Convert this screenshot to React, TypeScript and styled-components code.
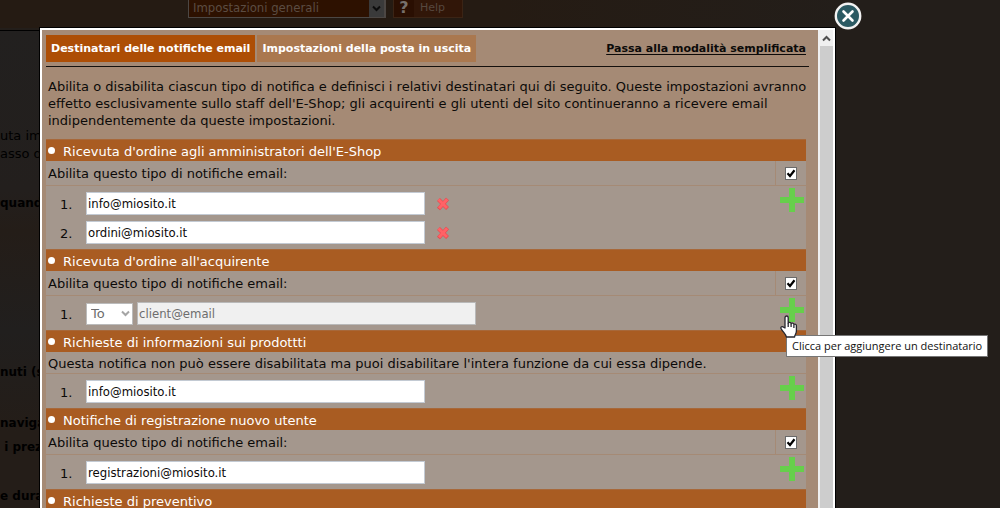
import React from "react";
import styled, { createGlobalStyle } from "styled-components";

const Global = createGlobalStyle`
  * { box-sizing: border-box; }
  body { margin: 0; background: #231e1a; font-family: "DejaVu Sans", Verdana, sans-serif; font-size: 13px; color: #0c0a09; }
  button, input, select { font: inherit; margin: 0; padding: 0; }
`;

const Page = styled.div`
  position: relative;
  height: 100vh;
  overflow: hidden;
  background: #231e1a;
`;

const TopBar = styled.header`
  display: flex;
  gap: 7px;
  height: 28px;
  padding-left: 188px;
  background: linear-gradient(90deg, #251b13 50%, #231e1a 85%);
`;

const DimSelect = styled.select`
  appearance: none;
  width: 180px;
  height: 17px;
  padding: 0 0 2px 4px;
  border: 0;
  background: #2d1100;
  color: #5b4c42;
  font-family: "DejaVu Sans Condensed", "DejaVu Sans", sans-serif;
  font-stretch: condensed;
  line-height: 15px;
`;

const DimSelectBox = styled.div`
  display: flex;
  height: 18px;
  border: 1px solid #4c4744;
  border-width: 0 2px 1px 1px;
`;

const DimArrow = styled.span`
  display: flex;
  align-items: center;
  justify-content: center;
  width: 15px;
  background: #3a3a3a;
`;

const DimHelp = styled.button`
  display: flex;
  width: 70px;
  height: 18px;
  border: 1px solid #3b2415;
  border-top: 0;
  background: #311608;
  color: #57483f;
  font-size: 11px;
  line-height: 16px;
`;

const DimMark = styled.span`
  width: 20px;
  background: #2a0f02;
  color: #77706b;
  font-weight: bold;
  font-size: 16px;
`;

const DimLabel = styled.span`
  padding-left: 6px;
`;

const DimColumn = styled.main`
  width: 40px;
  overflow: hidden;
  white-space: nowrap;
  border-top: 1px solid #000;
  margin-top: 2px;
  height: 100%;
  background: linear-gradient(#22201f, #231f1d 160px, #241d18 200px, #211f1e 300px, #241d18 400px);
`;

const DimLine = styled.p<{ $gap: number; $bold?: boolean }>`
  margin: ${(p) => p.$gap}px 0 0;
  line-height: 18px;
  color: #000;
  font-weight: ${(p) => (p.$bold ? "bold" : "normal")};
  font-size: ${(p) => (p.$bold ? 12 : 13)}px;
`;

const Modal = styled.section`
  position: absolute;
  top: 28px;
  left: 40px;
  right: 165px;
  min-height: 100%;
  display: flex;
  border: 2px solid #fff;
  box-shadow: 0 0 0 1px #000;
  background: #a58a75;
`;

const Content = styled.div`
  flex: 1;
  min-width: 0;
  padding: 5px 12px 0 4px;
`;

const ScrollTrack = styled.div`
  width: 15px;
  border-left: 2px solid #f0f0f0;
  background: #cdcdcd;
`;

const ScrollUp = styled.button`
  display: flex;
  align-items: center;
  justify-content: center;
  width: 100%;
  height: 16px;
  border: 0;
  background: #f0f0f0;
`;

const CloseButton = styled.button`
  position: absolute;
  top: -28px;
  right: -29px;
  width: 28px;
  height: 28px;
  border: 0;
  background: none;
  svg { display: block; }
`;

const TabBar = styled.nav`
  display: flex;
  align-items: center;
  gap: 2px;
  height: 32px;
  padding-bottom: 4px;
  margin-right: -3px;
  border-bottom: 1px solid #14100d;
`;

const Tab = styled.button<{ $active?: boolean }>`
  height: 27px;
  padding: 0 5px;
  border: 0;
  background: ${(p) => (p.$active ? "#ad4e05" : "#aa784f")};
  color: #fff;
  font-size: 11px;
  font-weight: bold;
  white-space: nowrap;
`;

const ModeLink = styled.a`
  margin-left: auto;
  padding-right: 3px;
  color: #0c0a09;
  font-size: 11px;
  font-weight: bold;
  text-underline-offset: 2px;
`;

const Intro = styled.p`
  margin: 11px -10px 10px 0;
  padding-left: 2px;
  line-height: 17px;
`;

const Heading = styled.h2`
  display: flex;
  align-items: center;
  gap: 8px;
  height: 22px;
  margin: 0;
  padding: 2px 0 0 2px;
  background: #a95c22;
  border-top: 1px solid #a7683a;
  color: #fff;
  font-size: 13px;
  font-weight: normal;
  &::before {
    content: "";
    width: 7px;
    height: 7px;
    margin-bottom: 2px;
    border-radius: 50%;
    background: #fff;
  }
`;

const Group = styled.section`
  background: #a4978d;
`;

const EnableRow = styled.label`
  display: flex;
  height: 25px;
  border-bottom: 1px solid #a58a75;
  line-height: 26px;
  padding-left: 2px;
`;

const EnableText = styled.span`
  flex: 1;
`;

const CheckCell = styled.span`
  position: relative;
  width: 31px;
  border-left: 1px solid #a58a75;
  svg { position: absolute; left: 9px; top: 6px; pointer-events: none; }
`;

const CheckBox = styled.input`
  appearance: none;
  display: block;
  width: 12px;
  height: 13px;
  margin: 6px 0 0 9px;
  border: 1px solid #6a6a6a;
  background: #fff;
`;

const Note = styled.p`
  height: 22px;
  margin: 0;
  padding-left: 2px;
  border-bottom: 1px solid #a58a75;
  line-height: 24px;
`;

const Body = styled.div`
  display: flex;
  align-items: flex-start;
  justify-content: space-between;
  padding: 2px 2px 0 0;
`;

const Recipients = styled.ol`
  display: flex;
  flex-direction: column;
  gap: 6px;
  margin: 0;
  padding: 4px 0 5px 14px;
  list-style: none;
`;

const Recipient = styled.li`
  display: flex;
  align-items: center;
  height: 23px;
`;

const Num = styled.span`
  width: 26px;
  padding-top: 2px;
`;

const Email = styled.input`
  width: 339px;
  height: 23px;
  padding: 0 1px;
  border: 1px solid #c3cad3;
  background: #fff;
  color: #0c0a09;
  font-family: "DejaVu Sans Condensed", "DejaVu Sans", sans-serif;
  font-stretch: condensed;
  &:disabled { background: #f0f0f0; color: #6d6d6d; border-color: #b9b9b9; }
`;

const KindBox = styled.span`
  display: flex;
  align-items: center;
  width: 47px;
  height: 22px;
  margin-right: 4px;
  border: 1px solid #bbb;
  background: #fff;
`;

const Kind = styled.select`
  appearance: none;
  width: 34px;
  height: 20px;
  padding-left: 4px;
  border: 0;
  background: #fff;
  color: #6d6d6d;
  opacity: 1;
`;

const IconButton = styled.button`
  display: block;
  border: 0;
  background: none;
  svg { display: block; }
`;

const RemoveButton = styled(IconButton)`
  margin-left: 11px;
`;

const AddBox = styled.div`
  position: relative;
`;

const Pointer = styled.svg`
  position: absolute;
  left: 0;
  top: 17px;
  z-index: 2;
`;

const Tooltip = styled.div`
  position: absolute;
  left: 6px;
  top: 37px;
  z-index: 1;
  height: 22px;
  padding: 0 5px;
  border: 1px solid #767676;
  background: #fff;
  color: #111;
  font-family: "Open Sans", "Noto Sans", sans-serif;
  font-size: 11px;
  line-height: 20px;
  white-space: nowrap;
`;

const Chevron = ({ up, color, size = 9 }: { up?: boolean; color: string; size?: number }) => (
  <svg width={size} height={size} viewBox="0 0 9 9" fill="none" stroke={color} strokeWidth="2">
    <path d={up ? "M1 6.5 4.5 3 8 6.5" : "M1 2.5 4.5 6 8 2.5"} />
  </svg>
);

const CheckMark = () => (
  <svg width="12" height="13" viewBox="0 0 12 13" fill="none" stroke="#000" strokeWidth="2.2">
    <path d="M2.5 6.2 5 9 9.5 3.3" />
  </svg>
);

const PlusIcon = () => (
  <svg width="24" height="24" viewBox="0 0 24 24" fill="#66cf4b">
    <path d="M9 0h6v9h9v6h-9v9H9v-9H0V9h9z" />
  </svg>
);

const CrossIcon = () => (
  <svg width="14" height="14" viewBox="0 0 14 14" fill="none">
    <path d="M2.5 2.5 11.5 11.5M11.5 2 2.5 12" stroke="#e8474c" strokeWidth="4" />
    <path d="M2.5 2.5 11 11M11.2 2.2 3 11.2" stroke="#ff6266" strokeWidth="3" />
  </svg>
);

type Item = { email: string; kind?: string; removable?: boolean };

function Notification({ title, items, note, tip }: { title: string; items: Item[]; note?: string; tip?: string }) {
  return (
    <Group>
      <Heading>{title}</Heading>
      {note ? (
        <Note>{note}</Note>
      ) : (
        <EnableRow>
          <EnableText>Abilita questo tipo di notifiche email:</EnableText>
          <CheckCell>
            <CheckBox type="checkbox" defaultChecked />
            <CheckMark />
          </CheckCell>
        </EnableRow>
      )}
      <Body>
        <Recipients>
          {items.map((item, i) => (
            <Recipient key={item.email}>
              <Num>{i + 1}.</Num>
              {item.kind && (
                <KindBox>
                  <Kind disabled aria-label="Tipo di destinatario">
                    <option>{item.kind}</option>
                  </Kind>
                  <Chevron color="#a5a5a5" />
                </KindBox>
              )}
              <Email type="text" aria-label={`${title} ${i + 1}`} defaultValue={item.email} disabled={!!item.kind} />
              {item.removable && (
                <RemoveButton aria-label="Rimuovi">
                  <CrossIcon />
                </RemoveButton>
              )}
            </Recipient>
          ))}
        </Recipients>
        <AddBox>
          <IconButton aria-label="Aggiungi">
            <PlusIcon />
          </IconButton>
          {tip && (
            <>
              <Pointer width="18" height="24" viewBox="0 0 18 24" fill="#fff" stroke="#26262e" strokeWidth="1.3" strokeLinejoin="round">
                <path d="M5 13V2.8C5 .4 8.2.4 8.2 2.8V8c.4-1 2.7-.9 2.9.6.6-.9 2.6-.6 2.8.8.8-.6 2.5-.2 2.5 1.4V16c0 3-1.8 3.8-1.8 6H6.4c0-2.2-3-4.5-5.2-8.2-1-1.8 1-3 2.4-1.6z" />
                <path d="M8.2 8v4M11.1 9v3M13.9 10v3" />
              </Pointer>
              <Tooltip role="tooltip">{tip}</Tooltip>
            </>
          )}
        </AddBox>
      </Body>
    </Group>
  );
}

export default function App() {
  return (
    <Page>
      <Global />
      <TopBar>
        <DimSelectBox>
          <DimSelect aria-label="Sezione">
            <option>Impostazioni generali</option>
          </DimSelect>
          <DimArrow>
            <Chevron color="#0c0c0c" />
          </DimArrow>
        </DimSelectBox>
        <DimHelp>
          <DimMark>?</DimMark>
          <DimLabel>Help</DimLabel>
        </DimHelp>
      </TopBar>
      <DimColumn>
        <DimLine $gap={96}>uta im</DimLine>
        <DimLine $gap={0}>asso d</DimLine>
        <DimLine $gap={31} $bold>quand</DimLine>
        <DimLine $gap={151} $bold>nuti (s</DimLine>
        <DimLine $gap={33} $bold>naviga</DimLine>
        <DimLine $gap={6} $bold>&nbsp;i prez</DimLine>
        <DimLine $gap={31} $bold>e dura</DimLine>
      </DimColumn>
      <Modal>
        <Content>
          <TabBar>
            <Tab $active>Destinatari delle notifiche email</Tab>
            <Tab>Impostazioni della posta in uscita</Tab>
            <ModeLink href="#semplificata">Passa alla modalità semplificata</ModeLink>
          </TabBar>
          <Intro>
            Abilita o disabilita ciascun tipo di notifica e definisci i relativi destinatari qui di seguito. Queste
            impostazioni avranno effetto esclusivamente sullo staff dell'E-Shop; gli acquirenti e gli utenti del sito
            continueranno a ricevere email indipendentemente da queste impostazioni.
          </Intro>
          <Notification
            title="Ricevuta d'ordine agli amministratori dell'E-Shop"
            items={[
              { email: "info@miosito.it", removable: true },
              { email: "ordini@miosito.it", removable: true },
            ]}
          />
          <Notification
            title="Ricevuta d'ordine all'acquirente"
            items={[{ email: "client@email", kind: "To" }]}
            tip="Clicca per aggiungere un destinatario"
          />
          <Notification
            title="Richieste di informazioni sui prodottti"
            note="Questa notifica non può essere disabilitata ma puoi disabilitare l'intera funzione da cui essa dipende."
            items={[{ email: "info@miosito.it" }]}
          />
          <Notification title="Notifiche di registrazione nuovo utente" items={[{ email: "registrazioni@miosito.it" }]} />
          <Notification title="Richieste di preventivo" items={[]} />
        </Content>
        <ScrollTrack>
          <ScrollUp aria-label="Scorri in alto">
            <Chevron up color="#505050" />
          </ScrollUp>
        </ScrollTrack>
        <CloseButton aria-label="Chiudi">
          <svg width="28" height="28" viewBox="0 0 28 28">
            <circle cx="14" cy="14" r="12.2" fill="#2b5a63" stroke="#f2f2f2" strokeWidth="2.4" />
            <path d="M9.5 9.5 18.5 18.5M18.5 9.5 9.5 18.5" stroke="#fff" strokeWidth="2.6" strokeLinecap="round" />
          </svg>
        </CloseButton>
      </Modal>
    </Page>
  );
}
